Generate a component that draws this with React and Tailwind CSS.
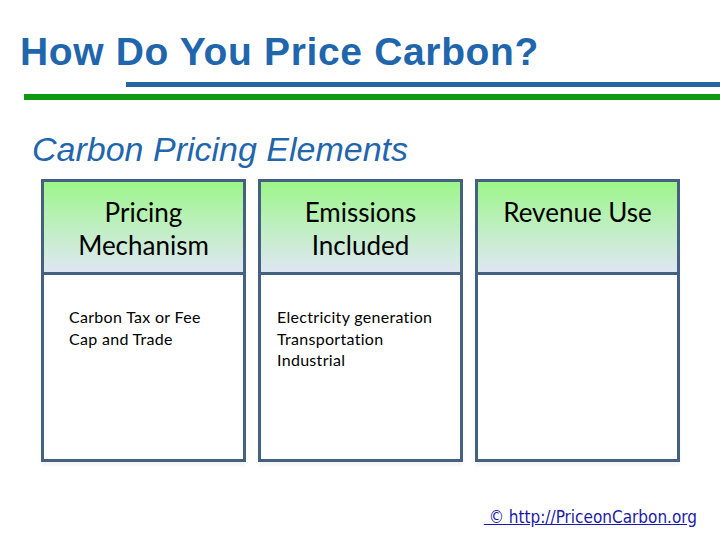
export default function App() {
  const columns = [
    { title: ['Pricing', 'Mechanism'], items: ['Carbon Tax or Fee', 'Cap and Trade'], pad: 'pl-[25px]' },
    { title: ['Emissions', 'Included'], items: ['Electricity generation', 'Transportation', 'Industrial'], pad: 'pl-[16px]' },
    { title: ['Revenue Use'], items: [], pad: 'pl-[16px]' },
  ];

  return (
    <div className="w-[720px] h-[540px] bg-white overflow-hidden flex flex-col">
      <h1 className="pl-[20px] pt-[30px] h-[82px] text-[39px] leading-[44px] font-bold text-[#1f66ad] font-['Liberation_Sans',Arial,sans-serif] tracking-[0.65px]">
        How Do You Price Carbon?
      </h1>
      <div className="ml-[126px] h-[5px] bg-[#2664a1]" />
      <div className="ml-[24px] mt-[7px] h-[6px] bg-[#0e990e]" />

      <h2 className="pl-[32px] mt-[31px] text-[34px] leading-[36px] italic text-[#1f66ad] font-['Liberation_Sans',Arial,sans-serif]">
        Carbon Pricing Elements
      </h2>

      <div className="ml-[41px] mt-[12px] flex gap-[12px]">
        {columns.map((c, i) => (
          <div key={i} className="w-[205px] h-[283px] border-[3px] border-[#46617f] flex flex-col shadow-[0_4px_3px_rgba(0,0,0,0.04)]">
            <div className="h-[93px] border-b-[3px] border-[#46617f] bg-gradient-to-b from-[#9cf588] to-[#dee6f2] pt-[14px] text-center text-[26px] leading-[33px] text-black font-['Lato','Open_Sans',sans-serif]">
              {c.title.map((t) => (
                <div key={t}>{t}</div>
              ))}
            </div>
            <div className={`${c.pad} pt-[31px] text-[16px] leading-[21.5px] tracking-[0.3px] text-black font-['Lato','Open_Sans',sans-serif]`}>
              {c.items.map((t) => (
                <div key={t}>{t}</div>
              ))}
            </div>
          </div>
        ))}
      </div>

      <div className="flex justify-end pr-[23px] mt-[45px]">
        <a className="underline text-[17px] leading-[20px] text-[#1a1aa6] font-['DejaVu_Sans_Condensed','Liberation_Sans',sans-serif]">
          &nbsp;© http://PriceonCarbon.org
        </a>
      </div>
    </div>
  );
}
